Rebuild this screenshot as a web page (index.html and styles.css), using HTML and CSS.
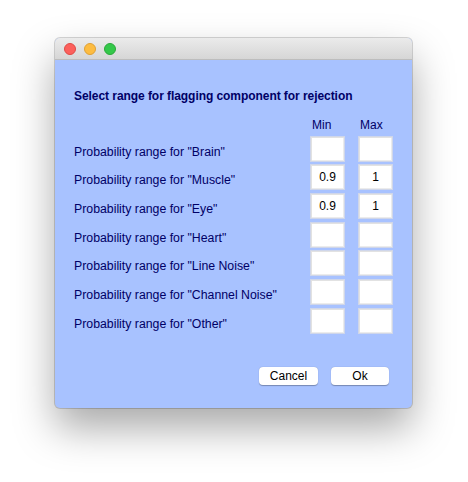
FILE: index.html
```html
<!DOCTYPE html>
<html>
<head>
<meta charset="utf-8">
<link rel="stylesheet" href="styles.css">
</head>
<body>
<div class="window">
  <div class="titlebar">
    <span class="light red"></span>
    <span class="light yellow"></span>
    <span class="light green"></span>
  </div>
  <div class="content">
    <div class="heading">Select range for flagging component for rejection</div>
    <div class="grid">
      <div></div><div class="colhead">Min</div><div class="colhead">Max</div>
      <div class="label">Probability range for "Brain"</div><div class="box"></div><div class="box"></div>
      <div class="label">Probability range for "Muscle"</div><div class="box">0.9</div><div class="box">1</div>
      <div class="label">Probability range for "Eye"</div><div class="box">0.9</div><div class="box">1</div>
      <div class="label">Probability range for "Heart"</div><div class="box"></div><div class="box"></div>
      <div class="label">Probability range for "Line Noise"</div><div class="box"></div><div class="box"></div>
      <div class="label">Probability range for "Channel Noise"</div><div class="box"></div><div class="box"></div>
      <div class="label">Probability range for "Other"</div><div class="box"></div><div class="box"></div>
    </div>
    <div class="buttons">
      <div class="btn cancel">Cancel</div>
      <div class="btn ok">Ok</div>
    </div>
  </div>
</div>
</body>
</html>
```
FILE: styles.css
```css
html, body {
  margin: 0;
  padding: 0;
  background: #ffffff;
}
html { height: 100%; }
body {
  min-height: 100%;
  box-sizing: border-box;
  padding: 38px 0 0 55px;
  font-family: "Liberation Sans", Arial, sans-serif;
}
.window {
  width: 357px;
  height: 370px;
  box-sizing: border-box;
  border-radius: 5px;
  background: #a8c2ff;
  box-shadow: 0 0 0 1px rgba(0,0,0,0.16), 0 20px 40px rgba(0,0,0,0.34);
  overflow: hidden;
  display: flex;
  flex-direction: column;
}
.titlebar {
  height: 21px;
  flex: none;
  background: linear-gradient(#ebebeb, #d6d6d6);
  border-bottom: 1px solid #bdbdbd;
  display: flex;
  align-items: center;
  gap: 8px;
  padding-left: 9px;
}
.light {
  width: 12px;
  height: 12px;
  border-radius: 50%;
  box-sizing: border-box;
}
.red { background: #fc605c; border: 1px solid #de4a45; }
.yellow { background: #fdbc40; border: 1px solid #dea035; }
.green { background: #34c84a; border: 1px solid #2aa83a; }
.content {
  flex: 1;
  padding: 29px 19px 0 19px;
  color: #000066;
  display: flex;
  flex-direction: column;
}
.heading {
  font-weight: bold;
  font-size: 12px;
  line-height: 14px;
  letter-spacing: -0.06px;
}
.grid {
  margin-top: 16px;
  display: grid;
  grid-template-columns: 1fr 35px 35px;
  column-gap: 13px;
  row-gap: 2.7px;
  grid-template-rows: 14px repeat(7, 26px);
}
.colhead {
  font-size: 12px;
  line-height: 14px;
  padding-left: 2px;
  margin-top: -1px;
}
.label {
  font-size: 12.3px;
  line-height: 14px;
  padding-top: 9px;
  white-space: nowrap;
}
.box {
  background: #ffffff;
  border: 1px solid #cfd6ea;
  box-shadow: inset 1px 1px 0 #e2e2e2, inset -1px -1px 0 #ececec;
  box-sizing: border-box;
  color: #000;
  font-size: 12px;
  display: flex;
  align-items: center;
  justify-content: center;
}
.buttons {
  margin-top: 33px;
  display: flex;
  justify-content: flex-end;
  gap: 13px;
  padding-right: 4px;
}
.btn {
  height: 18px;
  background: #ffffff;
  border-radius: 4px;
  box-shadow: 0 0.5px 1px rgba(0,0,0,0.3);
  color: #000;
  font-size: 12px;
  display: flex;
  align-items: center;
  justify-content: center;
}
.cancel { width: 59px; }
.ok { width: 58px; }
```
